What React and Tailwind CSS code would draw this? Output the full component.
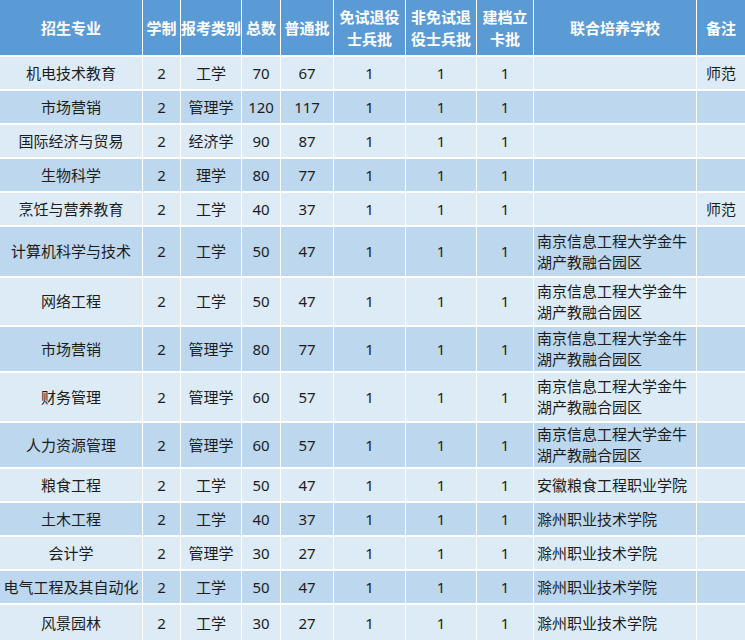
import React from 'react'

const cols = 'grid-cols-[142px_37px_60px_38px_52px_71px_70px_56px_162px_48px]'

const nanxin = '南京信息工程大学金牛\n湖产教融合园区'
const chuzhou = '滁州职业技术学院'

const rows = [
  ['机电技术教育', '2', '工学', '70', '67', '1', '1', '1', '', '师范', 32],
  ['市场营销', '2', '管理学', '120', '117', '1', '1', '1', '', '', 32],
  ['国际经济与贸易', '2', '经济学', '90', '87', '1', '1', '1', '', '', 32],
  ['生物科学', '2', '理学', '80', '77', '1', '1', '1', '', '', 32],
  ['烹饪与营养教育', '2', '工学', '40', '37', '1', '1', '1', '', '师范', 32],
  ['计算机科学与技术', '2', '工学', '50', '47', '1', '1', '1', nanxin, '', 49],
  ['网络工程', '2', '工学', '50', '47', '1', '1', '1', nanxin, '', 47],
  ['市场营销', '2', '管理学', '80', '77', '1', '1', '1', nanxin, '', 44],
  ['财务管理', '2', '管理学', '60', '57', '1', '1', '1', nanxin, '', 48],
  ['人力资源管理', '2', '管理学', '60', '57', '1', '1', '1', nanxin, '', 44],
  ['粮食工程', '2', '工学', '50', '47', '1', '1', '1', '安徽粮食工程职业学院', '', 32],
  ['土木工程', '2', '工学', '40', '37', '1', '1', '1', chuzhou, '', 32],
  ['会计学', '2', '管理学', '30', '27', '1', '1', '1', chuzhou, '', 32],
  ['电气工程及其自动化', '2', '工学', '50', '47', '1', '1', '1', chuzhou, '', 32],
  ['风景园林', '2', '工学', '30', '27', '1', '1', '1', chuzhou, '', 36],
]

const headers = [
  '招生专业',
  '学制',
  '报考类别',
  '总数',
  '普通批',
  '免试退役\n士兵批',
  '非免试退\n役士兵批',
  '建档立\n卡批',
  '联合培养学校',
  '备注',
]

const Lines = ({ text }) =>
  text.split('\n').map((line, i) => (
    <span key={i} className="block">
      {line}
    </span>
  ))

export default function App() {
  return (
    <div
      className="w-[745px] h-[640px] overflow-hidden bg-white"
      style={{ fontFamily: '"Noto Sans", "Noto Sans CJK SC", sans-serif' }}
    >
      <div className={`grid ${cols} gap-x-px gap-y-[2px] bg-white`}>
        {/* Header */}
        {headers.map((h, i) => (
          <div
            key={i}
            className="h-[55px] bg-[#5b9bd5] text-white font-bold text-[15px] leading-[22px] flex flex-col items-center justify-center text-center whitespace-nowrap"
          >
            <Lines text={h} />
          </div>
        ))}

        {/* Body */}
        {rows.map((row, r) => {
          const bg = r % 2 === 0 ? 'bg-[#ddebf7]' : 'bg-[#bdd7ee]'
          const height = row[10]
          return row.slice(0, 10).map((cell, c) => (
            <div
              key={`${r}-${c}`}
              style={{ height }}
              className={`${bg} text-[#1c1c1c] text-[15px] leading-[21px] flex flex-col justify-center whitespace-nowrap ${
                c === 8 ? 'items-start pl-[3px]' : 'items-center text-center'
              }`}
            >
              <Lines text={cell} />
            </div>
          ))
        })}
      </div>
    </div>
  )
}
